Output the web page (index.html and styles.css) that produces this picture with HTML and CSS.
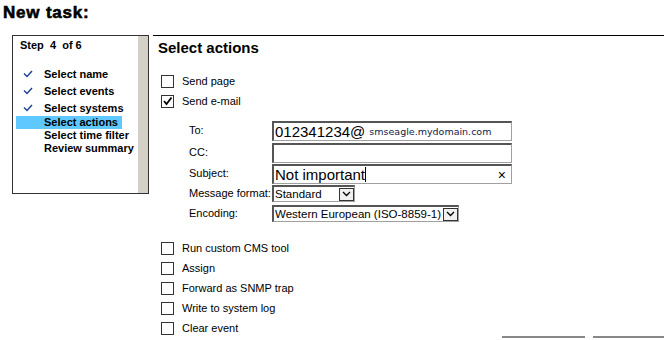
FILE: index.html
```html
<!DOCTYPE html>
<html>
<head>
<meta charset="utf-8">
<link rel="stylesheet" href="styles.css">
</head>
<body>
<h1 class="title">New task:</h1>
<div class="wrap">
  <div class="steps">
    <div class="steps-inner">
      <div class="step-head">Step&nbsp; 4&nbsp; of 6</div>
      <ul class="step-list">
        <li class="done"><span class="chk"><svg width="10" height="8" viewBox="0 0 10 8"><path d="M1 3.5 L4 6.5 L9 1" fill="none" stroke="#1a3f8f" stroke-width="1.4"/></svg></span>Select name</li>
        <li class="done"><span class="chk"><svg width="10" height="8" viewBox="0 0 10 8"><path d="M1 3.5 L4 6.5 L9 1" fill="none" stroke="#1a3f8f" stroke-width="1.4"/></svg></span>Select events</li>
        <li class="done"><span class="chk"><svg width="10" height="8" viewBox="0 0 10 8"><path d="M1 3.5 L4 6.5 L9 1" fill="none" stroke="#1a3f8f" stroke-width="1.4"/></svg></span>Select systems</li>
        <li class="cur"><span class="cur-bg">Select actions</span></li>
        <li class="plain">Select time filter</li>
        <li class="plain">Review summary</li>
      </ul>
    </div>
    <div class="scroll"></div>
  </div>
  <div class="main">
    <h2 class="heading">Select actions</h2>
    <div class="opt first"><span class="box"></span>Send page</div>
    <div class="opt"><span class="box"><svg width="11" height="11" viewBox="0 0 11 11"><path d="M2 5 L4.5 8 L9.5 1.5" fill="none" stroke="#000" stroke-width="1.8"/></svg></span>Send e-mail</div>
    <div class="form">
      <div class="frow r1"><span class="lbl">To:</span><span class="inp"><span class="big">012341234@</span><span class="dom">smseagle.mydomain.com</span></span></div>
      <div class="frow"><span class="lbl">CC:</span><span class="inp"></span></div>
      <div class="frow"><span class="lbl">Subject:</span><span class="inp"><span class="big">Not important</span><span class="caret"></span><span class="x">×</span></span></div>
      <div class="frow sel-row"><span class="lbl">Message format:</span><span class="sel w1"><span class="sel-t">Standard</span><span class="arr"><svg width="9" height="6" viewBox="0 0 9 6"><path d="M1 1 L4.5 4.5 L8 1" fill="none" stroke="#000" stroke-width="1.3"/></svg></span></span></div>
      <div class="frow sel-row"><span class="lbl">Encoding:</span><span class="sel w2"><span class="sel-t">Western European (ISO-8859-1)</span><span class="arr"><svg width="9" height="6" viewBox="0 0 9 6"><path d="M1 1 L4.5 4.5 L8 1" fill="none" stroke="#000" stroke-width="1.3"/></svg></span></span></div>
    </div>
    <div class="opt gap"><span class="box"></span>Run custom CMS tool</div>
    <div class="opt"><span class="box"></span>Assign</div>
    <div class="opt"><span class="box"></span>Forward as SNMP trap</div>
    <div class="opt"><span class="box"></span>Write to system log</div>
    <div class="opt"><span class="box"></span>Clear event</div>
    <div class="btns"><span class="btn b1"></span><span class="btn b2"></span></div>
  </div>
</div>
</body>
</html>
```
FILE: styles.css
```css
html, body { margin: 0; padding: 0; background: #fff; overflow: hidden; }
body { font-family: "Liberation Sans", Arial, sans-serif; font-size: 11px; color: #000; width: 664px; height: 340px; }
.title { margin: 0; padding: 4px 0 0 3px; font-size: 17px; font-weight: 900; line-height: 18px; letter-spacing: 0.8px; -webkit-text-stroke: 0.6px #000; }
.wrap { display: flex; margin-top: 13px; }
.steps { margin-left: 12px; width: 137px; height: 159px; border: 1px solid #333; display: flex; box-sizing: border-box; }
.steps-inner { flex: 1; }
.scroll { width: 10px; background: #d4d0c8; }
.step-head { font-weight: bold; padding: 3px 0 0 7px; line-height: 13px; }
.step-list { list-style: none; margin: 14px 0 0 0; padding: 0; font-weight: bold; }
.step-list li { line-height: 13px; height: 13px; padding-left: 31px; position: relative; }
.step-list li.done { height: 17px; line-height: 17px; }
.step-list li.done:nth-child(3) { height: 16px; }
.chk { position: absolute; left: 10px; top: 4px; line-height: 0; }
.cur { padding-left: 3px !important; }
.cur-bg { display: inline-block; background: #5fc8ff; padding-left: 28px; width: 78px; height: 13px; line-height: 12px; }
.step-list li.plain { line-height: 13px; }
.main { flex: 1; margin-left: 4px; border-top: 1px solid #000; height: 302px; position: relative; }
.heading { margin: 3px 0 0 5px; font-size: 15px; font-weight: bold; line-height: 18px; }
.opt { display: flex; align-items: center; height: 20px; padding-left: 8px; }
.opt.first { margin-top: 14px; }
.opt.gap { margin-top: 13px; }
.box { width: 11px; height: 11px; border: 1px solid #333; margin-right: 8px; display: inline-flex; align-items: center; justify-content: center; background: #fff; }
.form { margin-top: 10px; padding-left: 36px; }
.frow { display: flex; align-items: flex-start; height: 21px; }
.frow.r1 { height: 22px; }
.frow .lbl { padding-top: 3px; }
.frow.sel-row { height: 20px; }
.frow.sel-row .lbl { padding-top: 2px; }
.lbl { width: 83px; }
.inp { width: 240px; height: 20px; box-sizing: border-box; border: 1px solid #a0a0a0; border-top: 2px solid #555; border-left: 2px solid #555; display: flex; align-items: center; padding-left: 1px; position: relative; }
.big { font-size: 15px; line-height: 16px; }
.dom { font-family: "DejaVu Sans", Verdana, sans-serif; font-size: 9.5px; color: #14204a; margin-left: 4px; }
.caret { width: 1px; height: 15px; background: #000; }
.x { position: absolute; right: 5px; top: 1px; font-size: 14px; }
.sel { height: 17px; box-sizing: border-box; border: 1px solid #a0a0a0; border-top: 2px solid #555; border-left: 2px solid #555; display: flex; align-items: center; justify-content: space-between; font-size: 11.5px; white-space: nowrap; }
.sel-t { padding-left: 1px; }
.w1 { width: 83px; }
.w2 { width: 187px; }
.arr { width: 15px; height: 13px; box-sizing: border-box; border: 1px solid #333; display: flex; align-items: center; justify-content: center; background: #f0f0f0; flex: none; }
.btns { position: absolute; bottom: 0; right: 0; display: flex; gap: 8px; }
.btn { height: 2px; background: #888; }
.b1 { width: 83px; }
.b2 { width: 71px; }
```
